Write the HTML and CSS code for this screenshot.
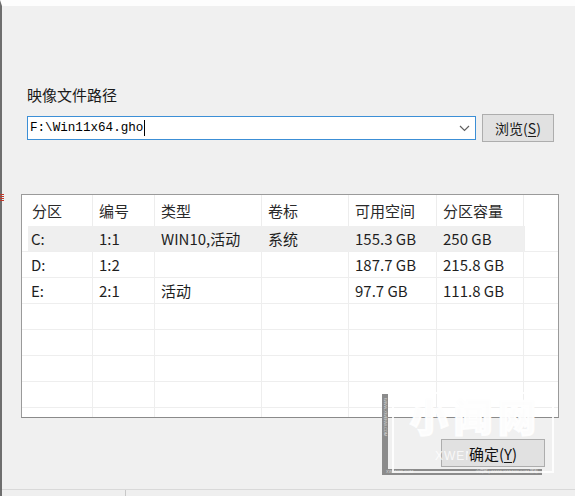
FILE: index.html
```html
<!DOCTYPE html>
<html lang="zh-CN">
<head>
<meta charset="utf-8">
<title>映像文件路径</title>
<link rel="stylesheet" href="styles.css">
</head>
<body>
<div class="window">
  <span class="red-mark"></span>
  <div class="content">
    <div class="label">映像文件路径</div>
    <div class="path-row">
      <div class="combo">
        <span class="combo-text">F:\Win11x64.gho</span><span class="caret"></span>
        <svg class="chev" width="11" height="7" viewBox="0 0 11 7"><polyline points="1,1 5.5,5.5 10,1" fill="none" stroke="#606060" stroke-width="1.2"/></svg>
      </div>
      <button class="btn browse">浏览(<u>S</u>)</button>
    </div>
    <div class="list">
      <table class="grid">
        <colgroup>
          <col class="c1"><col class="c2"><col class="c3"><col class="c4"><col class="c5"><col class="c6"><col class="c7">
        </colgroup>
        <thead>
          <tr><th>分区</th><th>编号</th><th>类型</th><th>卷标</th><th>可用空间</th><th>分区容量</th><th></th></tr>
        </thead>
        <tbody>
          <tr class="sel"><td>C:</td><td>1:1</td><td>WIN10,活动</td><td>系统</td><td>155.3 GB</td><td>250 GB</td><td class="fill"></td></tr>
          <tr><td>D:</td><td>1:2</td><td></td><td></td><td>187.7 GB</td><td>215.8 GB</td><td></td></tr>
          <tr><td>E:</td><td>2:1</td><td>活动</td><td></td><td>97.7 GB</td><td>111.8 GB</td><td></td></tr>
          <tr><td></td><td></td><td></td><td></td><td></td><td></td><td></td></tr>
          <tr><td></td><td></td><td></td><td></td><td></td><td></td><td></td></tr>
          <tr><td></td><td></td><td></td><td></td><td></td><td></td><td></td></tr>
          <tr><td></td><td></td><td></td><td></td><td></td><td></td><td></td></tr>
          <tr><td></td><td></td><td></td><td></td><td></td><td></td><td></td></tr>
        </tbody>
      </table>
    </div>
    <div class="footer">
      <button class="btn ok">确定(<u>Y</u>)</button>
    </div>
  </div>
  <div class="statusbar"><span class="tick"></span></div>

  <div class="watermark">
    <div class="wm-vbar"><span>WWW.XWENW.COM</span></div>
    <div class="wm-hbar"><span>XWENWI.COM</span><span>小闻网 | WWW.XWENW.COM 所有</span></div>
    <div class="wm-frame">
      <div class="wm-title">小闻网</div>
      <div class="wm-sub">XWENW.COM</div>
    </div>
  </div>
</div>
</body>
</html>
```

FILE: styles.css
```css
* { box-sizing: border-box; }

html, body {
  margin: 0;
  padding: 0;
  width: 575px;
  height: 496px;
  overflow: hidden;
  background: #f0f0f0;
}

.window {
  position: relative;
  width: 575px;
  height: 496px;
  display: flex;
  flex-direction: column;
  background: #f0f0f0;
  border-top: 6px solid #fdfdfd;
  border-left: 2px solid #6e6e6e;
  font-family: "Noto Sans CJK SC", "Noto Sans", sans-serif;
  color: #1e1e1e;
}

.red-mark {
  position: absolute;
  left: -2px;
  top: 188px;
  width: 4px;
  height: 7px;
  background: repeating-linear-gradient(to bottom, #c0392b 0, #c0392b 1px, transparent 1px, transparent 2px);
}

.content {
  padding-left: 19px;
  display: flex;
  flex-direction: column;
}

.label {
  margin-top: 79px;
  margin-left: 6px;
  font-size: 15px;
  line-height: 20px;
  color: #1a1a1a;
}

.path-row {
  margin-top: 9px;
  margin-left: 6px;
  display: flex;
  align-items: center;
  gap: 6px;
  height: 28px;
}

.combo {
  width: 449px;
  height: 24px;
  background: #fff;
  border: 1px solid #3c8fd6;
  display: flex;
  align-items: center;
  padding-left: 2px;
  position: relative;
}

.combo-text {
  font-family: "Liberation Mono", "Courier New", monospace;
  font-size: 12.6px;
  color: #000;
}

.caret {
  display: inline-block;
  width: 1px;
  height: 16px;
  background: #000;
  margin-left: 1px;
}

.chev {
  margin-left: auto;
  margin-right: 5px;
}

.btn {
  font-family: "Noto Sans CJK SC", sans-serif;
  font-size: 14px;
  color: #1a1a1a;
  background: #e1e1e1;
  border: 1px solid #adadad;
  padding: 0;
  line-height: 1;
}

.btn u {
  text-decoration: underline;
  text-underline-offset: 2px;
}

.browse {
  width: 72px;
  height: 28px;
}

.list {
  margin-top: 52px;
  width: 538px;
  height: 224px;
  border: 1px solid #9a9a9a;
  border-bottom-color: #8a8a8a;
  background: #fff;
  overflow: hidden;
}

.grid {
  table-layout: fixed;
  border-collapse: separate;
  border-spacing: 0;
  width: 536px;
  font-size: 15px;
  color: #1f1f1f;
}

.c1 { width: 71px; }
.c2 { width: 62px; }
.c3 { width: 107px; }
.c4 { width: 87px; }
.c5 { width: 88px; }
.c6 { width: 87px; }
.c7 { width: 34px; }

.grid th {
  height: 31px;
  font-weight: normal;
  text-align: left;
  padding: 0 0 1px 6px;
  border-right: 1px solid #ededed;
  color: #2a2a2a;
  white-space: nowrap;
}

.grid th:first-child { padding-left: 10px; }

.grid td {
  height: 26px;
  padding: 0 0 0 6px;
  border-right: 1px solid #eeeeee;
  border-bottom: 1px solid #eeeeee;
  white-space: nowrap;
  line-height: 25px;
}

.grid td:first-child { padding-left: 9px; }

.grid th:last-child,
.grid td:last-child { border-right: none; }

.grid tr.sel td {
  background: #efefef;
  border-right-color: #efefef;
}

.grid tr.sel td:first-child {
  background: linear-gradient(to right, #fff 6px, #efefef 6px);
}

.grid tr.sel td.fill {
  background: #fff;
  border-left: 1px solid #eeeeee;
}

.footer {
  margin-top: 21px;
  display: flex;
  justify-content: flex-end;
  padding-right: 30px;
}

.ok {
  width: 104px;
  height: 28px;
  font-size: 15px;
  color: #111;
}

.statusbar {
  margin-top: auto;
  height: 7px;
  border-top: 1px solid #d9d9d9;
  background: #efefef;
  position: relative;
}

.tick {
  position: absolute;
  left: 123px;
  top: 0;
  width: 1px;
  height: 6px;
  background: #c8c8c8;
}

/* watermark overlay */
.watermark {
  position: absolute;
  left: 380px;
  top: 380px;
  width: 175px;
  height: 90px;
  pointer-events: none;
}

.wm-vbar {
  position: absolute;
  left: 0;
  top: 8px;
  width: 6px;
  height: 81px;
  background: #8b8b8b;
  overflow: hidden;
}

.wm-vbar span {
  position: absolute;
  left: 1px;
  top: 4px;
  writing-mode: vertical-rl;
  font-family: "Liberation Sans", sans-serif;
  font-size: 4px;
  color: #d8d8d8;
  white-space: nowrap;
}

.wm-hbar {
  position: absolute;
  left: 0;
  top: 83px;
  width: 160px;
  height: 6px;
  background: #8b8b8b;
  display: flex;
  justify-content: space-between;
  align-items: center;
  padding: 0 4px;
  font-family: "Liberation Sans", "Noto Sans CJK SC", sans-serif;
  font-size: 4px;
  line-height: 4px;
  color: #dcdcdc;
  white-space: nowrap;
}

.wm-frame {
  position: absolute;
  left: 10px;
  top: 6px;
  width: 162px;
  height: 81px;
  border: 2px solid rgba(255, 255, 255, 0.85);
  display: flex;
  flex-direction: column;
  align-items: center;
}

.wm-title {
  margin-top: 1px;
  padding-left: 6px;
  font-family: "Noto Sans CJK SC", sans-serif;
  font-weight: 900;
  font-size: 38px;
  line-height: 40px;
  letter-spacing: 6px;
  color: rgba(255, 255, 255, 0.95);
  -webkit-text-stroke: 2px rgba(255, 255, 255, 0.95);
  text-shadow: 0 0 1px rgba(0, 0, 0, 0.12);
}

.wm-sub {
  align-self: flex-start;
  margin-top: 14px;
  margin-left: 41px;
  width: 33px;
  overflow: hidden;
  white-space: nowrap;
  font-family: "Liberation Sans", sans-serif;
  font-size: 12px;
  line-height: 14px;
  letter-spacing: 1px;
  color: rgba(255, 255, 255, 0.8);
}
```
